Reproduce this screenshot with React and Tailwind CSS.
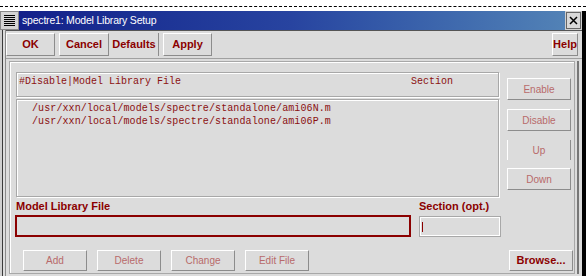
const raised =
  "border border-t-white border-l-white border-b-[#8c8c8c] border-r-[#8c8c8c] bg-[#dcdcdc]";

const ToolButton = ({ children, w }) => (
  <div
    className={`${raised} ${w} h-[23px] flex items-center justify-center text-[11px] font-bold text-[#8b0000]`}
  >
    {children}
  </div>
);

const SideButton = ({ children, className = "" }) => (
  <div
    className={`w-[64px] flex items-center justify-center text-[10px] text-[#b86a6a] ${className}`}
  >
    {children}
  </div>
);

const Hamburger = () => (
  <div className="w-[19px] h-[19px] bg-[#d4d4d4] border border-[#888] flex flex-col justify-center gap-[1px] px-[3px]">
    {[0, 1, 2, 3, 4, 5].map((i) => (
      <div key={i} className="h-[1px] bg-black" />
    ))}
  </div>
);

const CloseX = () => (
  <div className="w-[15px] h-[17px] bg-[#d8d8d8] border border-[#666] flex items-center justify-center">
    <svg width="9" height="9" viewBox="0 0 9 9">
      <path d="M1 1L8 8M8 1L1 8" stroke="#000" strokeWidth="1.5" />
    </svg>
  </div>
);

export default function App() {
  return (
    <div
      className="w-[586px] h-[276px] bg-white overflow-hidden"
      style={{ fontFamily: '"Liberation Sans", Arial, sans-serif' }}
    >
      {/* dotted strip */}
      <div className="h-[11px] pt-[6px]">
        <div className="border-t border-dashed border-black" />
      </div>

      <div className="flex h-[265px] border-r-4 border-black">
        <div className="flex-1 flex flex-col">
          {/* title bar */}
          <div className="flex h-[19px] items-stretch">
            <Hamburger />
            <div className="flex-1 bg-gradient-to-r from-[#14208a] via-[#2844a0] to-[#5282b6] flex items-center pl-[3px] text-white text-[10.5px] tracking-[-0.2px] leading-none">
              spectre1: Model Library Setup
            </div>
            <div className="bg-[#cfcfcf] flex items-center px-[1px]">
              <CloseX />
            </div>
          </div>

          {/* body */}
          <div className="flex-1 flex bg-[#dcdcdc]">
            <div className="w-[2px] bg-[#cfcfcf]" />
            <div className="w-[1px] bg-[#3a3a3a]" />
            <div className="w-[2px] bg-[#dcdcdc]" />
            <div className="w-[1px] bg-[#8a8a8a]" />

            <div className="flex-1 flex flex-col border-t border-[#555]">
              {/* toolbar */}
              <div className="h-[28px] flex items-center pr-[4px] border-b border-[#a0a0a0]">
                <div className="flex gap-[4px] items-center">
                  <ToolButton w="w-[49px]">OK</ToolButton>
                  <ToolButton w="w-[50px]">Cancel</ToolButton>
                  <div className="w-[49px] h-[23px] -ml-[3px] flex items-center justify-center text-[11px] font-bold text-[#8b0000] border-r border-[#8c8c8c]">
                    Defaults
                  </div>
                  <ToolButton w="w-[49px]">Apply</ToolButton>
                </div>
                <div className="flex-1" />
                <ToolButton w="w-[26px]">Help</ToolButton>
              </div>

              {/* main panel */}
              <div className="flex-1 flex pt-[2px] pl-[3px] pr-[3px] pb-[2px]">
                <div className="flex-1 border border-[#a8a8a8] shadow-[inset_1px_1px_0_#fff] pl-[6px] pt-[10px] flex flex-col">
                  <div className="flex">
                    <div
                      className="w-[483px] flex flex-col text-[10px] text-[#8b1010]"
                      style={{ fontFamily: '"Liberation Mono", "Courier New", monospace' }}
                    >
                      <div className="h-[25px] border border-[#a8a8a8] shadow-[inset_1px_1px_0_#fff,1px_1px_0_#fff] flex items-start pt-[2px] pl-[2px] leading-[14px]">
                        <span className="w-[392px] whitespace-pre">#Disable|Model Library File</span>
                        <span>Section</span>
                      </div>
                      <div className="h-[98px] mt-[2px] border border-[#a8a8a8] shadow-[inset_1px_1px_0_#fff,1px_1px_0_#fff] pl-[15px] pt-[2px] leading-[13px] tracking-[0.1px]">
                        <div>/usr/xxn/local/models/spectre/standalone/ami06N.m</div>
                        <div>/usr/xxn/local/models/spectre/standalone/ami06P.m</div>
                      </div>
                    </div>

                    <div className="ml-[8px] pt-[6px] flex flex-col">
                      <SideButton className={`${raised} h-[22px]`}>Enable</SideButton>
                      <SideButton className={`${raised} h-[22px] mt-[9px]`}>Disable</SideButton>
                      <SideButton className="h-[20px] mt-[9px] border-l border-l-white border-r border-r-[#8c8c8c]">
                        Up
                      </SideButton>
                      <SideButton className={`${raised} h-[22px] mt-[8px]`}>Down</SideButton>
                    </div>
                  </div>

                  <div className="flex mt-[3px]">
                    <div className="flex flex-col">
                      <div className="text-[11px] font-bold text-[#8b0000] leading-[13px]">
                        Model Library File
                      </div>
                      <div className="w-[396px] h-[22px] -ml-[1px] mt-[2px] border-2 border-[#8b0000] bg-[#dcdcdc]" />
                    </div>
                    <div className="flex flex-col ml-[8px]">
                      <div className="text-[11px] font-bold text-[#8b0000] leading-[13px]">
                        Section (opt.)
                      </div>
                      <div className="w-[82px] h-[21px] mt-[3px] border border-[#a8a8a8] shadow-[inset_0_0_0_1px_#fff] flex items-center pl-[2px]">
                        <div className="w-[1px] h-[10px] bg-[#8b0000]" />
                      </div>
                    </div>
                  </div>

                  <div className="flex mt-[13px] items-center">
                    <div className="flex gap-[10px] ml-[7px]">
                      <SideButton className={`${raised} h-[21px]`}>Add</SideButton>
                      <SideButton className={`${raised} h-[21px]`}>Delete</SideButton>
                      <SideButton className={`${raised} h-[21px]`}>Change</SideButton>
                      <SideButton className={`${raised} h-[21px]`}>Edit File</SideButton>
                    </div>
                    <div className="flex-1" />
                    <div className={`${raised} w-[64px] h-[21px] mr-[1px] flex items-center justify-center text-[11px] font-bold text-[#8b0000]`}>
                      Browse...
                    </div>
                  </div>
                </div>
                <div className="w-[2px]" />
                <div className="w-[2px] bg-[#777]" />
              </div>
            </div>
          </div>
        </div>
      </div>
    </div>
  );
}
